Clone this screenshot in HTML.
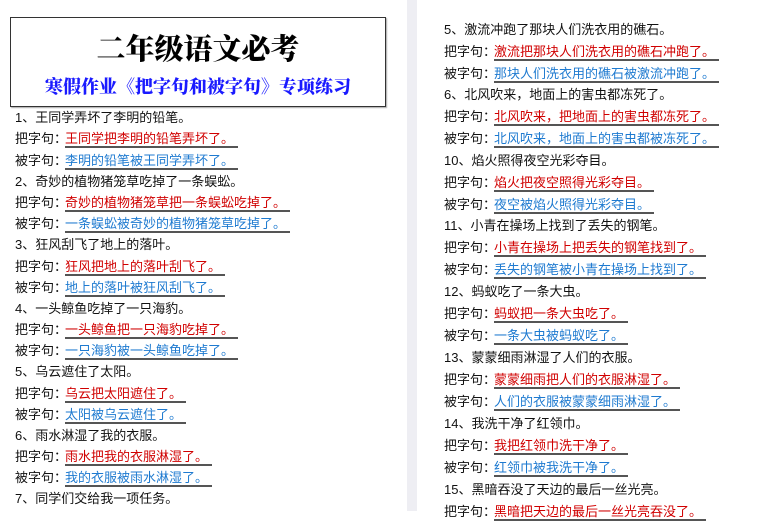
<!DOCTYPE html>
<html><head><meta charset="utf-8"><style>
body{margin:0;width:765px;height:511px;overflow:hidden;background:#fff;font-family:"Liberation Sans","Noto Sans CJK SC",sans-serif;font-size:13px;color:#111;position:relative}
.gap{position:absolute;left:407px;top:0;width:10px;height:511px;background:#eeeef3}
.box{position:absolute;left:10px;top:17px;width:374px;height:88px;border:1px solid #333;box-shadow:1px 1px 1px #aaa;text-align:center}
.t1{font-family:"Noto Serif CJK SC",serif;font-weight:900;font-size:29px;margin-top:10px;line-height:40px;color:#000}
.t2{font-family:"Noto Serif CJK SC",serif;font-weight:900;font-size:18px;color:#1a1aff;line-height:28px;margin-top:4px}
.col{position:absolute}
.l{position:absolute;white-space:nowrap;line-height:16px}
.r{color:#d00000}.b{color:#1e7ad0}
.u{border-bottom:2px solid #555;padding-right:4px;margin-left:-2px}
</style></head><body>
<div class="gap"></div>
<div class="box"><div class="t1">二年级语文必考</div><div class="t2">寒假作业《把字句和被字句》专项练习</div></div>
<div class="col" style="left:15px;top:110px">
<div class="l" style="top:0">1、王同学弄坏了李明的铅笔。</div>
<div class="l" style="top:21px">把字句：<span class="r u">王同学把李明的铅笔弄坏了。</span></div>
<div class="l" style="top:43px">被字句：<span class="b u">李明的铅笔被王同学弄坏了。</span></div>
<div class="l" style="top:64px">2、奇妙的植物猪笼草吃掉了一条蜈蚣。</div>
<div class="l" style="top:85px">把字句：<span class="r u">奇妙的植物猪笼草把一条蜈蚣吃掉了。</span></div>
<div class="l" style="top:106px">被字句：<span class="b u">一条蜈蚣被奇妙的植物猪笼草吃掉了。</span></div>
<div class="l" style="top:127px">3、狂风刮飞了地上的落叶。</div>
<div class="l" style="top:149px">把字句：<span class="r u">狂风把地上的落叶刮飞了。</span></div>
<div class="l" style="top:170px">被字句：<span class="b u">地上的落叶被狂风刮飞了。</span></div>
<div class="l" style="top:191px">4、一头鲸鱼吃掉了一只海豹。</div>
<div class="l" style="top:212px">把字句：<span class="r u">一头鲸鱼把一只海豹吃掉了。</span></div>
<div class="l" style="top:233px">被字句：<span class="b u">一只海豹被一头鲸鱼吃掉了。</span></div>
<div class="l" style="top:254px">5、乌云遮住了太阳。</div>
<div class="l" style="top:276px">把字句：<span class="r u">乌云把太阳遮住了。</span></div>
<div class="l" style="top:297px">被字句：<span class="b u">太阳被乌云遮住了。</span></div>
<div class="l" style="top:318px">6、雨水淋湿了我的衣服。</div>
<div class="l" style="top:339px">把字句：<span class="r u">雨水把我的衣服淋湿了。</span></div>
<div class="l" style="top:360px">被字句：<span class="b u">我的衣服被雨水淋湿了。</span></div>
<div class="l" style="top:381px">7、同学们交给我一项任务。</div>
</div>
<div class="col" style="left:444px;top:22px">
<div class="l" style="top:0">5、激流冲跑了那块人们洗衣用的礁石。</div>
<div class="l" style="top:22px">把字句：<span class="r u">激流把那块人们洗衣用的礁石冲跑了。</span></div>
<div class="l" style="top:44px">被字句：<span class="b u">那块人们洗衣用的礁石被激流冲跑了。</span></div>
<div class="l" style="top:65px">6、北风吹来，地面上的害虫都冻死了。</div>
<div class="l" style="top:87px">把字句：<span class="r u">北风吹来，把地面上的害虫都冻死了。</span></div>
<div class="l" style="top:109px">被字句：<span class="b u">北风吹来，地面上的害虫都被冻死了。</span></div>
<div class="l" style="top:131px">10、焰火照得夜空光彩夺目。</div>
<div class="l" style="top:153px">把字句：<span class="r u">焰火把夜空照得光彩夺目。</span></div>
<div class="l" style="top:175px">被字句：<span class="b u">夜空被焰火照得光彩夺目。</span></div>
<div class="l" style="top:196px">11、小青在操场上找到了丢失的钢笔。</div>
<div class="l" style="top:218px">把字句：<span class="r u">小青在操场上把丢失的钢笔找到了。</span></div>
<div class="l" style="top:240px">被字句：<span class="b u">丢失的钢笔被小青在操场上找到了。</span></div>
<div class="l" style="top:262px">12、蚂蚁吃了一条大虫。</div>
<div class="l" style="top:284px">把字句：<span class="r u">蚂蚁把一条大虫吃了。</span></div>
<div class="l" style="top:306px">被字句：<span class="b u">一条大虫被蚂蚁吃了。</span></div>
<div class="l" style="top:328px">13、蒙蒙细雨淋湿了人们的衣服。</div>
<div class="l" style="top:350px">把字句：<span class="r u">蒙蒙细雨把人们的衣服淋湿了。</span></div>
<div class="l" style="top:372px">被字句：<span class="b u">人们的衣服被蒙蒙细雨淋湿了。</span></div>
<div class="l" style="top:394px">14、我洗干净了红领巾。</div>
<div class="l" style="top:416px">把字句：<span class="r u">我把红领巾洗干净了。</span></div>
<div class="l" style="top:438px">被字句：<span class="b u">红领巾被我洗干净了。</span></div>
<div class="l" style="top:460px">15、黑暗吞没了天边的最后一丝光亮。</div>
<div class="l" style="top:482px">把字句：<span class="r u">黑暗把天边的最后一丝光亮吞没了。</span></div>
</div>
</body></html>
